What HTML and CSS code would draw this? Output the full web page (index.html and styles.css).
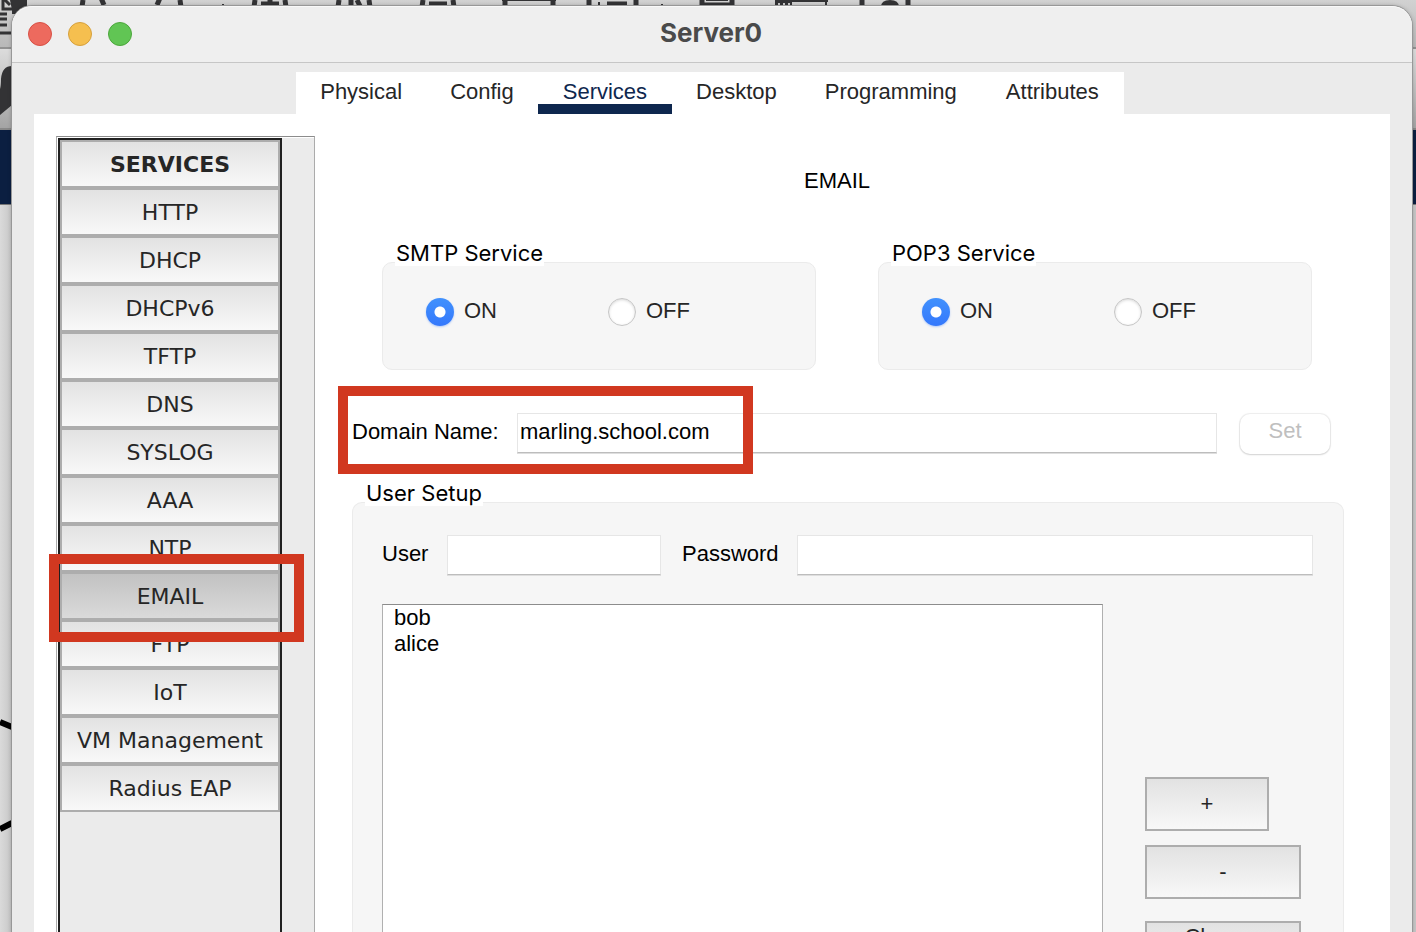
FILE: index.html
```html
<!DOCTYPE html>
<html lang="en">
<head>
<meta charset="utf-8">
<title>Server0</title>
<link rel="stylesheet" href="styles.css">
</head>
<body>
<div class="desktop">
  <div class="backdrop" aria-hidden="true">
    <div class="backdrop-toolbar"></div>
    <div class="backdrop-tools"></div>
    <div class="backdrop-band"></div>
    <div class="backdrop-canvas"></div>
    <svg class="backdrop-icons" width="1416" height="932" viewBox="0 0 1416 932" fill="none" stroke="#333335" stroke-width="5">
      <path d="M10 0H27V14H12V10Z" fill="#333335" stroke="none"/>
      <path d="M3 0V9H12M5 0L10 5M0 14H7M0 19H7M0 25H7M0 33H12" stroke-width="3"/>
      <path d="M12 66Q2 66 1 79Q1 86 0 89V115L12 105Z" fill="#333335" stroke="none"/>
      <path d="M82 7L83 0M101 -2L104 5M157 5L160 -2M180 0L181 7M254 7L255 0M285 0L286 7M338 7L339 0M369 0L370 7M422 7L423 0M453 0L454 7"/>
      <path d="M261 4H279M270 0V7M351 0V7M357 0L360 6M429 4H447M505 0V7M553 0V7M589 0V7M636 0V7M607 4H627M702 0V7M732 0V7M700 5H734M862 0V7M908 0V7"/>
      <path d="M502 0H556M775 1H828M826 0V7M599 2V7M223 4V7M662 4V7M706 0H728" stroke-width="2"/>
      <path d="M775 2H792V7H775ZM792 5H828V7H792ZM881 7Q881 0 890 0T899 7ZM876 5H884V7H876Z" fill="#333335" stroke="none"/>
      <path d="M778 4H792" stroke="#ccc" stroke-width="2" stroke-dasharray="2 3"/>
      <path d="M0 722L12 727M0 829L12 823" stroke="#000" stroke-width="6"/>
    </svg>
  </div>

  <main class="window">
    <header class="titlebar">
      <div class="lights">
        <button class="light light-close" aria-label="Close"></button>
        <button class="light light-minimize" aria-label="Minimize"></button>
        <button class="light light-zoom" aria-label="Zoom"></button>
      </div>
      <h1 class="title">Server0</h1>
    </header>

    <nav class="tabs">
      <button class="tab">Physical</button>
      <button class="tab">Config</button>
      <button class="tab tab-active">Services</button>
      <button class="tab">Desktop</button>
      <button class="tab">Programming</button>
      <button class="tab">Attributes</button>
    </nav>

    <div class="panel">
      <aside class="sidebar">
        <div class="service-list">
          <button class="service service-heading">SERVICES</button>
          <button class="service">HTTP</button>
          <button class="service">DHCP</button>
          <button class="service">DHCPv6</button>
          <button class="service">TFTP</button>
          <button class="service">DNS</button>
          <button class="service">SYSLOG</button>
          <button class="service">AAA</button>
          <button class="service">NTP</button>
          <div class="marked">
            <button class="service service-active">EMAIL</button>
            <span class="marker marker-service"></span>
          </div>
          <button class="service">FTP</button>
          <button class="service">IoT</button>
          <button class="service">VM Management</button>
          <button class="service">Radius EAP</button>
        </div>
      </aside>

      <section class="content">
        <h2 class="heading">EMAIL</h2>

        <div class="protocols">
          <div class="group" role="group" aria-labelledby="smtp-title">
            <span class="group-title" id="smtp-title">SMTP Service</span>
            <div class="group-box radios">
              <label class="choice"><input class="radio" type="radio" name="smtp" checked>ON</label>
              <label class="choice"><input class="radio" type="radio" name="smtp">OFF</label>
            </div>
          </div>
          <div class="group" role="group" aria-labelledby="pop-title">
            <span class="group-title" id="pop-title">POP3 Service</span>
            <div class="group-box radios radios-wide">
              <label class="choice"><input class="radio" type="radio" name="pop3" checked>ON</label>
              <label class="choice"><input class="radio" type="radio" name="pop3">OFF</label>
            </div>
          </div>
        </div>

        <div class="domain">
          <label class="domain-label" for="domain">Domain Name:</label>
          <input class="field domain-field" id="domain" type="text" value="marling.school.com">
          <button class="set" disabled>Set</button>
          <span class="marker marker-domain"></span>
        </div>

        <div class="group" role="group" aria-labelledby="setup-title">
          <span class="group-title" id="setup-title">User Setup</span>
          <div class="group-box setup">
            <div class="credentials">
              <label class="user-label" for="user">User</label>
              <input class="field user-field" id="user" type="text">
              <label class="password-label" for="password">Password</label>
              <input class="field password-field" id="password" type="password">
            </div>
            <div class="accounts">
              <select class="account-list" multiple aria-label="Users">
                <option class="account">bob</option>
                <option class="account">alice</option>
              </select>
              <div class="actions">
                <button class="action action-add">+</button>
                <button class="action">-</button>
                <button class="action action-change">Change<br>Password</button>
              </div>
            </div>
          </div>
        </div>
      </section>
    </div>
  </main>
</div>
</body>
</html>
```
FILE: styles.css
```css
* { box-sizing: border-box; }

body {
  margin: 0;
  color: #000;
  font: 22px/26px "Liberation Sans", Arial, sans-serif;
}

button, input, select { margin: 0; font: inherit; color: inherit; }
button { padding: 0; border: 0; background: none; }

.desktop {
  position: relative;
  height: 100vh;
  overflow: hidden;
  padding: 6px 4px 0 12px;
}

/* Application behind the dialog */
.backdrop {
  position: absolute;
  inset: 0;
  display: flex;
  flex-direction: column;
}
.backdrop-toolbar { height: 49px; background: linear-gradient(#d2d2d2, #b8b8b8); border-bottom: 2px solid #929292; }
.backdrop-tools { height: 81px; background: linear-gradient(#dcdcdc, #a4a4a4); border-bottom: 2px solid #888; }
.backdrop-band { height: 75px; background: #0b1f41; border-bottom: 1px solid #777; }
.backdrop-canvas { flex: 1; background: linear-gradient(90deg, #dadada, #c6c6c6 12px, #c6c6c6); }
.backdrop-icons { position: absolute; top: 0; left: 0; }

/* Dialog window */
.window {
  position: relative;
  display: flex;
  flex-direction: column;
  min-height: 100%;
  background: #ebebeb;
  border-radius: 20px 20px 0 0;
  box-shadow: 0 0 0 1px #989898, 0 0 4px rgba(0, 0, 0, 0.3);
}

.titlebar {
  display: grid;
  grid-template-columns: 1fr auto 1fr;
  align-items: center;
  height: 57px;
  padding: 0 18px 2px 16px;
  background: #efefef;
  border-top: 1px solid #f9f9f9;
  border-bottom: 1px solid #c6c6c6;
  border-radius: 20px 20px 0 0;
}
.lights { display: flex; gap: 16px; }
.light { width: 24px; height: 24px; border: 1px solid; border-radius: 50%; }
.light-close { background: #ed6a5e; border-color: #d85045; }
.light-minimize { background: #f5bf4f; border-color: #d6a03d; }
.light-zoom { background: #61c554; border-color: #4ca73c; }
.title { margin: 0; padding-bottom: 2px; color: #4a4a4a; font: 700 26px/30px Inter, sans-serif; }

.tabs {
  display: flex;
  align-self: center;
  margin: 9px 4px 0 0;
  background: #fff;
  color: #262626;
}
.tab {
  height: 42px;
  padding: 0 24px;
  border-bottom: 10px solid transparent;
  line-height: 40px;
}
.tab-active { padding: 0 25px; border-color: #0e274e; color: #0e274e; }
.tab:last-child { padding: 0 25px; }

.panel {
  display: flex;
  flex: 1;
  margin: 0 22px;
  padding: 22px 0 0 22px;
  background: #fff;
}

/* Service navigation */
.sidebar {
  flex: none;
  width: 259px;
  padding: 1px;
  background: #ebebeb;
  border: 1px solid #ababab;
  border-top-color: #8c8c8c;
  border-bottom: 0;
  box-shadow: inset 1px 1px #fff;
}
.service-list {
  display: flex;
  flex-direction: column;
  width: 224px;
  height: 100%;
  border: 2px solid #202020;
  border-bottom: 0;
}
.service {
  width: 100%;
  height: 48px;
  flex: none;
  padding-top: 2px;
  background: linear-gradient(#e2e2e2, #f8f8f8);
  border: 2px solid #adadad;
  color: #262626;
  font: 22px/42px Verdana, "DejaVu Sans", sans-serif;
}
.service-heading { font-weight: 700; }
.service-active { background: linear-gradient(#c2c2c2, #dadada); }
.marked { position: relative; }

/* Red callout frames drawn over the form */
.marker {
  position: absolute;
  border: 10px solid #d13820;
  pointer-events: none;
}
.marker-service { inset: -18px -24px -22px -11px; }
.marker-domain { top: -27px; left: -14px; width: 415px; height: 88px; }

/* Email form */
.content { flex: 1; min-width: 0; padding: 32px 46px 0 37px; }
.heading { margin: 0; padding-right: 22px; font: inherit; text-align: center; }

.protocols { display: flex; gap: 62px; margin: 46px 32px 0 30px; }
.group { display: flex; flex: 1; flex-direction: column; }
.group-title {
  position: relative;
  z-index: 1;
  align-self: flex-start;
  height: 26px;
  margin: 0 0 -4px 13px;
  padding: 0 1px;
  background: linear-gradient(#fff, #fff) bottom / 100% 6px no-repeat;
  font: 22px/26px Inter, sans-serif;
}
.group-box {
  background: #f6f6f6;
  border: 1px solid #ebebeb;
  border-radius: 10px;
}
.radios { display: grid; grid-template-columns: 182px 1fr; align-items: start; height: 108px; padding: 35px 0 0 43px; }
.radios-wide { grid-template-columns: 192px 1fr; }
.choice { display: flex; gap: 10px; color: #262626; line-height: 25px; }
.radio {
  appearance: none;
  width: 28px;
  height: 28px;
  border: 1px solid #c6c6c6;
  border-radius: 50%;
  background: #fff;
  box-shadow: inset 0 1px 3px rgba(0, 0, 0, 0.16);
}
.radio:checked {
  border: 0;
  background: radial-gradient(circle, #fff 5px, transparent 6px), linear-gradient(#4191fd, #3478fc);
  box-shadow: 0 1px 2px rgba(52, 120, 252, 0.35);
}

.domain { position: relative; display: flex; align-items: flex-start; margin: 43px 13px 0 0; }
.domain-label { width: 165px; line-height: 38px; }
.field {
  min-width: 0;
  height: 40px;
  padding: 0 2px 2px;
  background: #fff;
  border: 1px solid #e6e6e6;
  border-bottom-color: #bdbdbd;
  border-radius: 0;
  box-shadow: 0 1px #dedede;
  outline: 0;
}
.domain-field { flex: 1; }
.set {
  width: 90px;
  height: 40px;
  margin: 1px 1px 0 23px;
  padding-bottom: 6px;
  background: #fff;
  border-radius: 10px;
  box-shadow: 0 0 1px 1px rgba(0, 0, 0, 0.07), 0 1px 2px rgba(0, 0, 0, 0.12);
  color: #bfbfbf;
}

.domain + .group { margin-top: 26px; }
.setup { height: 600px; padding: 32px 30px 0 29px; border-bottom: 0; }
.credentials { display: flex; align-items: flex-start; line-height: 38px; }
.user-label { width: 65px; }
.user-field { width: 214px; margin-right: 21px; }
.password-label { width: 115px; }
.password-field { flex: 1; }

.accounts { display: flex; gap: 42px; margin: 29px 12px 0 0; }
.account-list {
  flex: 1;
  height: 500px;
  padding: 0;
  background: #fff;
  border: 1px solid #b0b0b0;
  border-top-color: #8c8c8c;
  border-radius: 0;
  outline: 0;
  overflow: hidden;
}
.account { height: 26px; min-height: 26px; padding: 0 11px; line-height: 26px; }
.actions { display: flex; flex-direction: column; flex: none; width: 156px; padding-top: 173px; }
.action {
  height: 54px;
  margin-bottom: 14px;
  background: linear-gradient(#e2e2e2, #f8f8f8);
  border: 2px solid #adadad;
  color: #262626;
}
.action-add { width: 124px; }
.action-change { height: 58px; margin-top: 8px; }
```
